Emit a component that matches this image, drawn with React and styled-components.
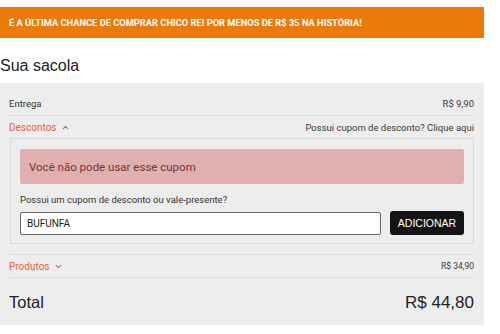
import React from 'react';
import styled, { createGlobalStyle } from 'styled-components';
import { ChevronUp, ChevronDown } from 'lucide-react';

const GlobalStyle = createGlobalStyle`
  body {
    margin: 0;
    background: #fff;
    font-family: Roboto, "Liberation Sans", Arial, sans-serif;
  }
`;

const Page = styled.div`
  width: 484px;
  padding-top: 7px;
`;

const Banner = styled.div`
  background: #ec7a0a;
  height: 31px;
  display: flex;
  align-items: center;
  padding-left: 9px;
  color: #fff;
  font-weight: 700;
  font-size: 9.3px;
  text-transform: uppercase;
`;

const Title = styled.h2`
  margin: 0;
  height: 45px;
  display: flex;
  align-items: flex-end;
  padding-bottom: 8px;
  box-sizing: border-box;
  font-family: "Liberation Sans", Arial, sans-serif;
  font-weight: 400;
  font-size: 16px;
  color: #222;
`;

const Panel = styled.div`
  background: #ededed;
  padding: 8px 10px 0 9px;
  height: 242px;
  box-sizing: border-box;
`;

const Row = styled.div`
  display: flex;
  align-items: center;
  justify-content: space-between;
  height: ${p => p.h || 23}px;
  border-bottom: ${p => (p.last ? 'none' : '1px solid #dcdcdc')};
  font-size: 9.5px;
  color: #333;
`;

const Section = styled.div`
  border-bottom: 1px solid #dcdcdc;
  padding-bottom: 10px;
`;

const Toggle = styled.span`
  display: inline-flex;
  align-items: center;
  gap: 4px;
  color: #e8613d;
  font-size: 10px;

  svg {
    color: #e8613d;
  }
`;

const Small = styled.span`
  font-size: ${p => p.size || 9.5}px;
  color: #3a3a3a;
`;

const CouponBox = styled.div`
  margin-left: 1px;
  border: 1px solid #d9d9d9;
  padding: 10px 9px 8px 9px;
`;

const Alert = styled.div`
  background: #e0b0b0;
  color: #7b3333;
  font-size: 11.5px;
  height: 35px;
  display: flex;
  align-items: center;
  padding-left: 9px;
  border-radius: 2px;
`;

const Label = styled.div`
  font-size: 9.5px;
  color: #333;
  margin: 10px 0 6px;
`;

const Form = styled.div`
  display: flex;
  gap: 9px;
  align-items: center;
`;

const Input = styled.input`
  flex: 1;
  height: 23px;
  box-sizing: border-box;
  border: 1px solid #666;
  border-radius: 2px;
  background: #fff;
  padding: 0 6px;
  font-family: Roboto, Arial, sans-serif;
  font-size: 10px;
  color: #1a1a1a;
  outline: none;
`;

const Button = styled.button`
  width: 74px;
  height: 24px;
  background: #141414;
  border: none;
  border-radius: 3px;
  color: #fff;
  font-family: "Liberation Sans", Arial, sans-serif;
  font-size: 10.5px;
  padding: 0;
`;

const TotalLabel = styled.span`
  font-family: "Liberation Sans", Arial, sans-serif;
  font-size: ${p => p.size}px;
  color: #222;
`;

export default function App() {
  return (
    <>
      <GlobalStyle />
      <Page>
        <Banner>É a última chance de comprar Chico Rei por menos de R$ 35 na história!</Banner>
        <Title>Sua sacola</Title>
        <Panel>
          <Row h={24}>
            <span>Entrega</span>
            <Small>R$ 9,90</Small>
          </Row>
          <Section>
            <Row h={22} last>
              <Toggle>Descontos <ChevronUp size={9} strokeWidth={3} /></Toggle>
              <Small>Possui cupom de desconto? Clique aqui</Small>
            </Row>
            <CouponBox>
              <Alert>Você não pode usar esse cupom</Alert>
              <Label>Possui um cupom de desconto ou vale-presente?</Label>
              <Form>
                <Input defaultValue="BUFUNFA" />
                <Button>ADICIONAR</Button>
              </Form>
            </CouponBox>
          </Section>
          <Row h={22}>
            <Toggle>Produtos <ChevronDown size={9} strokeWidth={3} /></Toggle>
            <Small size={8.5}>R$ 34,90</Small>
          </Row>
          <Row h={49} last>
            <TotalLabel size={16.5}>Total</TotalLabel>
            <TotalLabel size={17}>R$ 44,80</TotalLabel>
          </Row>
        </Panel>
      </Page>
    </>
  );
}
